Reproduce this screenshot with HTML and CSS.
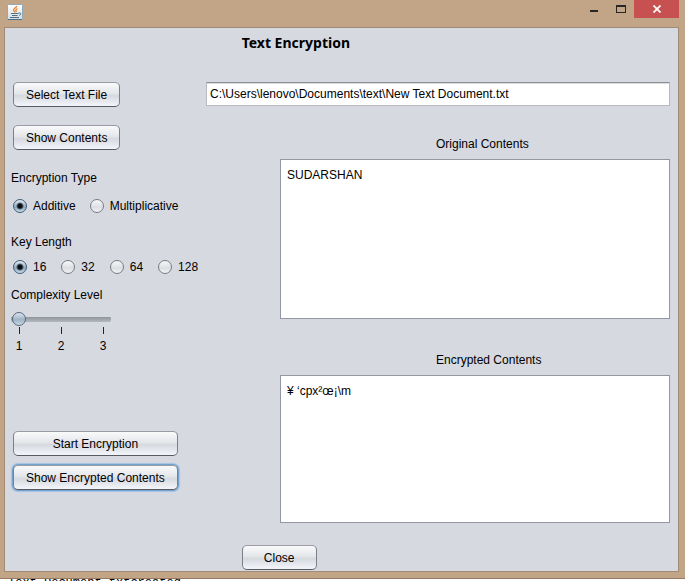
FILE: index.html
```html
<!DOCTYPE html>
<html lang="en">
<head>
<meta charset="utf-8">
<title>Text Encryption</title>
<link rel="stylesheet" href="styles.css">
</head>
<body>
<div class="window">
  <header class="titlebar">
    <svg class="app-icon" viewBox="0 0 16 16" aria-hidden="true">
      <defs><linearGradient id="tile" x1="0" y1="0" x2="0" y2="1"><stop offset="0" stop-color="#fff"/><stop offset="1" stop-color="#d3dde2"/></linearGradient></defs>
      <rect x=".5" y=".5" width="15" height="15" rx="1" fill="url(#tile)" stroke="#8fa9b8"/>
      <path d="M1 15.5h14" stroke="#4b6f86"/>
      <path d="M10 2C9 4 6 4.500 6.500 6.500 7 7.500 8 7.500 7.800 8.500M10.500 4.500C8.500 5.500 8.500 6.500 9.500 8" fill="none" stroke="#e8802a" stroke-width="1.300"/>
      <path d="M4 9.500h7.500M5 11.500h5.500M3 13.500h9" fill="none" stroke="#4f7088" stroke-width="1.200"/>
      <path d="M11.500 9c3-.8 3 2 .5 2.300" fill="none" stroke="#4f7088"/>
    </svg>
    <div class="window-controls">
      <button class="control" type="button" aria-label="Minimize"><svg width="10" height="8" viewBox="0 0 10 8"><path d="M1 5h8v2H1z" fill="#262626"/></svg></button>
      <button class="control" type="button" aria-label="Maximize"><svg width="10" height="8" viewBox="0 0 10 8"><path d="M0 0h10v8H0zM1 2v5h8V2z" fill="#262626" fill-rule="evenodd"/></svg></button>
      <button class="control close-control" type="button" aria-label="Close window"><svg width="8" height="8" viewBox="0 0 8 8"><path d="M.5.500 7.500 7.500M7.500.500.5 7.500" stroke="#fff" stroke-width="1.800"/></svg></button>
    </div>
  </header>
  <main class="panel">
    <h1>Text Encryption</h1>
    <div class="file-row">
      <button class="btn" type="button">Select Text File</button>
      <input class="path" type="text" aria-label="File path" value="C:\Users\lenovo\Documents\text\New Text Document.txt">
    </div>
    <div class="body">
      <div class="controls">
        <button class="btn" type="button">Show Contents</button>
        <fieldset class="type-group">
          <legend>Encryption Type</legend>
          <div class="radios">
            <label><input type="radio" name="type" checked>Additive</label>
            <label><input type="radio" name="type">Multiplicative</label>
          </div>
        </fieldset>
        <fieldset class="key-group">
          <legend>Key Length</legend>
          <div class="radios">
            <label><input type="radio" name="key" checked>16</label>
            <label><input type="radio" name="key">32</label>
            <label><input type="radio" name="key">64</label>
            <label><input type="radio" name="key">128</label>
          </div>
        </fieldset>
        <div class="level">
          <label for="level">Complexity Level</label>
          <input id="level" type="range" min="1" max="3" value="1">
          <ol class="ticks"><li>1</li><li>2</li><li>3</li></ol>
        </div>
        <div class="actions">
          <button class="btn" type="button">Start Encryption</button>
          <button class="btn focused" type="button">Show Encrypted Contents</button>
        </div>
      </div>
      <div class="contents">
        <label class="caption" for="original">Original Contents</label>
        <textarea class="original" id="original">SUDARSHAN</textarea>
        <label class="caption" for="encrypted">Encrypted Contents</label>
        <textarea class="encrypted" id="encrypted">¥ ‘cpx²œ¡\m</textarea>
      </div>
    </div>
    <button class="btn close-btn" type="button">Close</button>
  </main>
</div>
<div class="console">Text Document txtcreated</div>
</body>
</html>
```
FILE: styles.css
```css
* {
  box-sizing: border-box;
}

body {
  margin: 0;
  height: 100vh;
  display: flex;
  flex-direction: column;
  overflow: hidden;
  background: #fff;
  color: #000;
  font: 12px/16px "Liberation Sans", Arial, sans-serif;
}

button,
input,
textarea {
  font: inherit;
  color: inherit;
  margin: 0;
}

.window {
  flex: 1;
  min-height: 0;
  display: flex;
  flex-direction: column;
  padding: 0 6px 6px 4px;
  background: #c2a487;
  border-bottom: 1px solid #99795f;
}

.titlebar {
  flex: none;
  height: 27px;
  display: flex;
  justify-content: space-between;
}

.app-icon {
  width: 16px;
  height: 16px;
  margin: 4px 0 0 3px;
}

.window-controls {
  display: flex;
  align-items: flex-start;
}

.control {
  width: 27px;
  height: 18px;
  padding: 0;
  border: 0;
  background: none;
  display: flex;
  align-items: center;
  justify-content: center;
}

.close-control {
  width: 45px;
  background: #c75050;
}

.panel {
  flex: 1;
  min-height: 0;
  display: flex;
  flex-direction: column;
  padding: 5px 8px 1px 6px;
  border: 1px solid #a28b75;
  background: #d6d9e0;
}

h1 {
  margin: 0 0 29px 35%;
  font: bold 14px/20px "Noto Sans", Tahoma, sans-serif;
}

.btn {
  height: 25px;
  padding: 0 12px;
  margin-left: 2px;
  border: 1px solid #7b7f87;
  border-top-color: #999ca3;
  border-bottom-color: #565a61;
  border-radius: 5px;
  background: linear-gradient(#fafafb, #e4e6ea 45%, #d6d9df 55%, #f3f5fa);
  text-align: center;
  white-space: nowrap;
}

.btn.focused {
  box-shadow: 0 0 0 1px #73a4d1, 0 0 1px 2px #a4c1de;
}

.file-row {
  display: grid;
  grid-template-columns: 195px 1fr;
  justify-items: start;
}

.path {
  width: 100%;
  height: 24px;
  padding: 0 3px;
  border: 1px solid #b9bbc0;
  border-top-color: #8d8e91;
  background: #fff;
  box-shadow: inset 0 1px #dcdddf;
}

.body {
  flex: 1;
  min-height: 0;
  display: grid;
  grid-template-columns: 269px 1fr;
}

.controls {
  display: flex;
  flex-direction: column;
  align-items: flex-start;
  padding: 18px 0 33px;
}

fieldset {
  margin: 0;
  padding: 0;
  border: 0;
}

legend {
  padding: 0;
}

.type-group {
  margin-top: 20px;
}

.type-group .radios {
  margin-top: 12px;
}

.key-group {
  margin-top: 20px;
}

.key-group .radios {
  gap: 15px;
  margin-top: 9px;
}

.radios {
  display: flex;
  gap: 14px;
  padding-left: 2px;
}

.radios label {
  display: flex;
  align-items: center;
  gap: 6px;
}

.radios input {
  appearance: none;
  width: 14px;
  height: 14px;
  border: 1px solid #777b83;
  border-radius: 50%;
  background: linear-gradient(#f8f8fa, #dcdee3 60%, #f2f3f6);
}

.radios input:checked {
  border-color: #3f5c75;
  background: radial-gradient(circle, #0b0e12 0 2px, transparent 4px), linear-gradient(#e3ebf3, #8da9c0 60%, #c7dcea);
}

.level {
  display: flex;
  flex-direction: column;
  margin-top: 12px;
}

.level input {
  appearance: none;
  width: 100px;
  height: 16px;
  margin-top: 8px;
  padding: 0 1px;
  border-radius: 8px;
  background: linear-gradient(#8f949d, #b4b8c0) center / 100% 5px no-repeat;
}

.level input::-webkit-slider-thumb {
  appearance: none;
  width: 14px;
  height: 14px;
  border: 1px solid #56697b;
  border-radius: 50%;
  background: linear-gradient(#dbe5ed, #9fb4c6 55%, #c5d7e4);
}

.ticks {
  width: 100px;
  display: flex;
  justify-content: space-between;
  margin: 0;
  padding: 0 1px;
  list-style: none;
}

.ticks li {
  width: 14px;
  text-align: center;
}

.ticks li::before {
  content: "";
  display: block;
  width: 1px;
  height: 7px;
  margin: 0 auto 4px;
  background: #22252a;
}

.actions {
  display: flex;
  flex-direction: column;
  gap: 9px;
  margin-top: auto;
}

.contents {
  display: flex;
  flex-direction: column;
  padding-top: 29px;
}

.caption {
  margin: 0 0 7px 40%;
}

.original + .caption {
  margin-top: 33px;
}

textarea {
  min-height: 0;
  padding: 7px 6px;
  border: 1px solid #9297a1;
  background: #fff;
  resize: none;
}

.original {
  flex: 12 1 0;
}

.encrypted {
  flex: 11 1 0;
}

.close-btn {
  align-self: flex-start;
  width: 75px;
  margin: 22px 0 0 35%;
}

.console {
  flex: none;
  height: 2px;
  padding-left: 8px;
  overflow: hidden;
  font: 12px/8px "Liberation Mono", monospace;
}
```
